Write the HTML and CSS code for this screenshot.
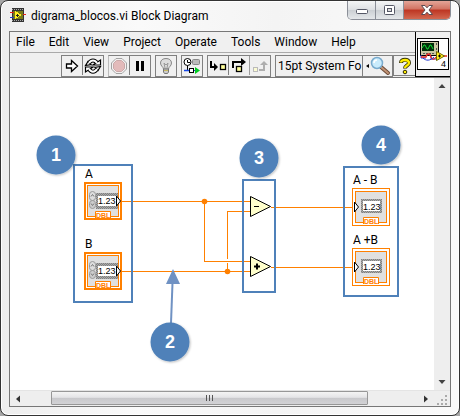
FILE: index.html
```html
<!DOCTYPE html>
<html lang="en">
<head>
<meta charset="utf-8">
<title>digrama_blocos.vi Block Diagram</title>
<link rel="stylesheet" href="styles.css">
</head>
<body>
<div class="window">
  <header class="titlebar">
    <svg class="app-icon" width="16" height="14" viewBox="0 0 16 14" shape-rendering="crispEdges" aria-hidden="true">
      <path fill="#333" d="M2 0h12v14H2z"/>
      <path stroke="#aaa" stroke-dasharray="1 1" d="M2 1.500h12M2 12.500h12"/>
      <path fill="#777a18" d="M3 3h10v8H3z"/>
      <path fill="#ffee20" d="M5 3l7 4-7 4z"/>
      <path stroke="#e32218" d="M0 4.500h4M13 6.500h3"/>
      <path stroke="#2538c8" d="M0 9.500h4"/>
      <path stroke="#222" d="M6 7.500h3M7.500 6v3"/>
    </svg>
    <h1 class="title">digrama_blocos.vi Block Diagram</h1>
    <div class="caption-buttons">
      <button class="caption minimize" aria-label="Minimize"><svg width="14" height="12" viewBox="0 0 14 12"><rect x="1.500" y="5.500" width="11" height="4" rx="1" fill="#fff" stroke="#555866"/></svg></button>
      <button class="caption maximize" aria-label="Maximize"><svg width="14" height="12" viewBox="0 0 14 12"><rect x="1.500" y="1.500" width="10" height="9" rx="1" fill="#fff" stroke="#555866"/><rect x="4.500" y="4.500" width="4" height="3" fill="#ddd" stroke="#555866"/></svg></button>
      <button class="caption close" aria-label="Close"><svg width="14" height="12" viewBox="0 0 14 12"><path d="M1.500 1.500h3.500l2 2.300 2-2.300h3.500L9 6l3.500 4.500H9L7 8.200 5 10.500H1.500L5 6z" fill="#fff" stroke="#5d4a50"/></svg></button>
    </div>
  </header>

  <main class="client">
    <div class="top">
      <div class="bars">
        <nav class="menu">
          <a href="#file">File</a><a href="#edit">Edit</a><a href="#view">View</a><a href="#project">Project</a><a href="#operate">Operate</a><a href="#tools">Tools</a><a href="#window">Window</a><a href="#help">Help</a>
        </nav>
        <div class="toolbar">
          <div class="group">
            <button class="tool" aria-label="Run"><svg width="18" height="18" viewBox="0 0 18 18"><path d="M3.500 7h5V3.500l6 5.500-6 5.500V11h-5z" fill="#fff" stroke="#000" stroke-width="1.300"/></svg></button>
            <button class="tool" aria-label="Run continuously"><svg width="18" height="18" viewBox="0 0 18 18"><g fill="none"><path d="M5 6c2-3.500 6-3.500 8 0M13 12c-2 3.500-6 3.500-8 0" stroke="#000" stroke-width="4"/><path d="M9 8h7.500v-5zM9 10H1.500v5z" fill="#fff" stroke="#000" stroke-width="1.200"/><path d="M1.500 8.500L4 4.500l3 3zM16.500 9.500L14 13.500l-3-3z" fill="#fff" stroke="#000" stroke-width="1.200"/><path d="M5 6c2-3.500 6-3.500 8 0M13 12c-2 3.500-6 3.500-8 0" stroke="#fff" stroke-width="2"/></g></svg></button>
          </div>
          <div class="group dim">
            <button class="tool faded" aria-label="Abort execution"><svg width="18" height="18" viewBox="0 0 18 18"><path d="M6 1.500h6L16.500 6v6L12 16.500H6L1.500 12V6z" fill="#f4f0f0" stroke="#888"/><path d="M6.500 3.500h5l3 3v5l-3 3h-5l-3-3v-5z" fill="#dfa9a9" stroke="#bd9090"/></svg></button>
            <button class="tool" aria-label="Pause"><svg width="18" height="18" viewBox="0 0 18 18"><path d="M5 4h3v10H5zM10 4h3v10h-3z"/></svg></button>
          </div>
          <div class="group">
            <button class="tool" aria-label="Highlight execution"><svg width="18" height="18" viewBox="0 0 18 18"><path d="M6.500 12c0-2-3-3-3-6C3.500 3 6 1.500 9 1.500S14.500 3 14.500 6c0 3-3 4-3 6z" fill="#ddd" stroke="#888"/><path d="M7 6l1 5M11 6l-1 5M7 6l2 2 2-2" fill="none" stroke="#999"/><path d="M6.500 12h5v3l-1 1.500h-3l-1-1.500z" fill="#ccc" stroke="#777"/><path d="M7 13.500h4" stroke="#c8b860"/></svg></button>
          </div>
          <div class="group">
            <button class="tool" aria-label="Retain wire values"><svg width="18" height="18" viewBox="0 0 18 18"><circle cx="4.500" cy="5" r="3.500" fill="#fff" stroke="#000"/><path d="M4.500 3v2.500H7M4.500 8.500V13" fill="none" stroke="#000"/><rect x="9.500" y="2.500" width="7" height="5" rx="1" fill="#bbb" stroke="#888"/><path d="M1 13.500h6" stroke="#1648e8" stroke-width="1.500"/><path d="M10 13.500h3" stroke="#1648e8"/><rect x="6.500" y="11.500" width="4" height="4" fill="#fff" stroke="#000"/><path d="M12 10l5 3.500-5 3.500z" fill="#00cc20"/></svg></button>
          </div>
          <div class="group">
            <button class="tool" aria-label="Step into"><svg width="18" height="18" viewBox="0 0 18 18"><path d="M2 4v6h3" fill="none" stroke="#000" stroke-width="2"/><path d="M5 6l4 4-4 4z"/><rect x="11.500" y="7.500" width="5" height="5" fill="#ffff9c" stroke="#000" stroke-width="1.300"/></svg></button>
            <button class="tool" aria-label="Step over"><svg width="18" height="18" viewBox="0 0 18 18"><path d="M3 11V5h9" fill="none" stroke="#000" stroke-width="2"/><path d="M11 1l5 4-5 4z"/><rect x="6.500" y="9.500" width="5" height="5" fill="#ffff9c" stroke="#000" stroke-width="1.300"/></svg></button>
            <button class="tool faded" aria-label="Step out"><svg width="18" height="18" viewBox="0 0 18 18"><rect x="2.500" y="10.500" width="4" height="4" fill="#ffffc8" stroke="#aaa"/><path d="M8 13h5V7" fill="none" stroke="#999" stroke-width="2"/><path d="M9 8l4-4 4 4z" fill="#999"/></svg></button>
          </div>
          <div class="group font-group">
            <button class="font-button">15pt System Fo</button>
            <button class="search" aria-label="Search"><svg width="26" height="20" viewBox="0 0 26 20"><path d="M1 10l3-2v4z"/><path d="M16 11l7 6" stroke="#6b4a37" stroke-width="4" stroke-linecap="round"/><path d="M16 11l7 6" stroke="#c09274" stroke-width="2" stroke-linecap="round"/><circle cx="12" cy="7" r="5.500" fill="#c9ebfc" stroke="#78aacd" stroke-width="1.500"/><path d="M9 7c0-2 1-3 3-3" fill="none" stroke="#fff" stroke-width="1.500"/></svg></button>
          </div>
          <button class="tool help" aria-label="Context help"><svg width="16" height="18" viewBox="0 0 16 18"><path d="M4 6c0-4.500 8-4.500 8 0 0 2.500-4 2.500-4 5.500" fill="none" stroke="#302c00" stroke-width="4"/><path d="M4 5.500c0-3.500 8-3.500 8 .5 0 2.500-4 2.500-4 5" fill="none" stroke="#ffed00" stroke-width="2.400"/><circle cx="8" cy="15" r="1.800" fill="#ffed00" stroke="#302c00"/></svg></button>
        </div>
      </div>
      <div class="vi-icon">
        <svg width="32" height="32" viewBox="0 0 32 32" role="img" aria-label="VI icon 4">
          <rect x=".5" y=".5" width="31" height="31" fill="#fff" stroke="#000"/>
          <rect x="3.500" y="3.500" width="18" height="14" fill="#c9c7a2" stroke="#000"/>
          <rect x="5" y="5" width="12" height="8" fill="#002d08"/>
          <path d="M5 10l2-3h1l2 4h1l2-4h1l2 4" fill="none" stroke="#16db36"/>
          <path d="M19.500 5v3M19.500 10v3M6 15.500h11" stroke="#555" stroke-dasharray="2 1"/>
          <path d="M4 17v3h5M14 18v3h6" fill="none" stroke="#2439d0"/>
          <path d="M4 19h5c1-4 4-4 5 0 1 3 3 3 5 0M26 18h4" fill="none" stroke="#e52b26" stroke-width="1.300"/>
          <path d="M6 20c3 3 7 3 11-1" fill="none" stroke="#2439d0"/>
          <path d="M19.500 13.500l8 4.500-8 4.500z" fill="#ffef1b" stroke="#6e6500"/>
          <path d="M21 18h3M22.500 16.500v3" stroke="#000"/>
          <text x="24" y="29" class="vi-number">4</text>
        </svg>
      </div>
    </div>

    <div class="workspace">
      <div class="canvas">
        <svg width="424" height="312" viewBox="10 78 424 312" role="img" aria-label="Block diagram">
          <defs>
            <pattern id="dither" width="2" height="2" patternUnits="userSpaceOnUse"><path fill="#aaa" d="M0 0h2v2H0z"/><path fill="#808080" d="M0 0h1v1H0zM1 1h1v1H1z"/></pattern>
            <filter id="soft" x="-20%" y="-20%" width="150%" height="150%"><feDropShadow dx="1" dy="1" stdDeviation="1" flood-opacity=".25"/></filter>
            <g id="control">
              <rect x="1" y="1" width="36" height="36" fill="#fff" stroke="#ff8000" stroke-width="2"/>
              <rect x="3.500" y="3.500" width="31" height="31" fill="#e0e0e0" stroke="#ff8000"/>
              <rect x="12" y="11" width="22" height="16" fill="url(#dither)"/>
              <rect x="5.500" y="9.500" width="6" height="9" rx="3" fill="#ddd" stroke="#999"/>
              <rect x="5.500" y="18.500" width="6" height="8" rx="3" fill="#ccc" stroke="#999"/>
              <path d="M7 14.500l1.500-2 1.500 2M7 21.500l1.500 2 1.500-2" fill="none" stroke="#777"/>
              <rect x="14" y="14" width="18" height="10" fill="#fff"/>
              <path d="M32.500 14v10l4-5z" fill="#fff" stroke="#000"/>
              <path d="M11.500 36v-6.500h15V36" fill="#fff" stroke="#ff8000"/>
              <text x="14" y="22" class="value">1.23</text>
              <text x="12" y="36" class="type">DBL</text>
            </g>
            <g id="indicator">
              <rect x=".5" y=".5" width="37" height="37" fill="#fff" stroke="#ff8000"/>
              <rect x="3.500" y="3.500" width="31" height="31" fill="#e0e0e0" stroke="#ff8000"/>
              <rect x="9" y="11" width="21" height="14" fill="url(#dither)"/>
              <rect x="11" y="13" width="17" height="10" fill="#fff"/>
              <path d="M2.500 14v10l4-5z" fill="#fff" stroke="#000"/>
              <path d="M11.500 36v-6.500h15V36" fill="#fff" stroke="#ff8000"/>
              <text x="11" y="22" class="value">1.23</text>
              <text x="12" y="36" class="type">DBL</text>
            </g>
          </defs>
          <g class="wire">
            <path d="M122 201.500h128M204.500 201v60.500H250M122 271.500h128M227.500 271v-8M227.500 259v-47.500H250M271 207.500h82M271 267.500h82"/>
          </g>
          <circle cx="204.500" cy="201.500" r="2.800" class="joint"/>
          <circle cx="227.500" cy="271.500" r="2.800" class="joint"/>
          <use href="#control" x="84" y="182"/>
          <use href="#control" x="84" y="252"/>
          <use href="#indicator" x="352" y="188"/>
          <use href="#indicator" x="352" y="248"/>
          <path class="node" d="M250.500 196.500v20l20-10z"/>
          <path class="node" d="M250.500 256.500v20l20-10z"/>
          <path class="sign" d="M254 206.500h5"/>
          <path class="sign plus" d="M254 266.500h6M257 263.500v6"/>
          <text class="label" x="85" y="178">A</text>
          <text class="label" x="85" y="248">B</text>
          <text class="label" x="353" y="184">A - B</text>
          <text class="label" x="353" y="244">A +B</text>
          <rect class="frame" x="74" y="165" width="58" height="137"/>
          <rect class="frame" x="243" y="180" width="32" height="112"/>
          <rect class="frame" x="344" y="167" width="54" height="129"/>
          <path d="M171 323l1.500-40" stroke="#7092c3" stroke-width="2"/>
          <path d="M173 269l7 15h-14z" fill="#7092c3"/>
          <g class="badges" filter="url(#soft)">
            <circle cx="56" cy="155" r="19.500"/><circle cx="170" cy="342" r="19.500"/><circle cx="259" cy="158" r="19.500"/><circle cx="381" cy="145" r="19.500"/>
          </g>
          <g class="numbers">
            <text x="56" y="161">1</text><text x="170" y="348">2</text><text x="259" y="164">3</text><text x="381" y="151">4</text>
          </g>
        </svg>
      </div>
      <div class="vscroll">
        <button class="arrow" aria-label="Scroll up"><svg width="8" height="5" viewBox="0 0 8 5"><path fill="#444" d="M4 0l3.500 4h-7z"/></svg></button>
        <button class="arrow" aria-label="Scroll down"><svg width="8" height="5" viewBox="0 0 8 5"><path fill="#444" d="M4 4L.5 0h7z"/></svg></button>
      </div>
    </div>

    <div class="hscroll">
      <button class="arrow" aria-label="Scroll left"><svg width="5" height="8" viewBox="0 0 5 8"><path fill="#333" d="M0 4l4-3.500v7z"/></svg></button>
      <div class="track"><div class="thumb"><i></i><i></i><i></i></div></div>
      <button class="arrow" aria-label="Scroll right"><svg width="5" height="8" viewBox="0 0 5 8"><path fill="#333" d="M4 4L0 .5v7z"/></svg></button>
      <svg class="grip" width="16" height="16" viewBox="0 0 16 16"><path fill="#aaa" d="M11 4h2v2h-2zM7 8h2v2H7zM11 8h2v2h-2zM3 12h2v2H3zM7 12h2v2H7zM11 12h2v2h-2z"/></svg>
    </div>
  </main>
</div>
</body>
</html>
```
FILE: styles.css
```css
* { box-sizing: border-box; }
html, body { height: 100%; }
body {
  margin: 0;
  background: #a6a6a6;
  font: 12px/16px Roboto, "Noto Sans", sans-serif;
  color: #000;
}
button { margin: 0; padding: 0; border: 0; background: none; font: inherit; color: inherit; }
svg { display: block; flex: none; }

.window {
  display: flex;
  flex-direction: column;
  height: 100vh;
  padding: 0 8px 8px;
  border: 1px solid #333;
  border-radius: 8px;
  background: linear-gradient(90deg, #eee, #fafafa 30%, #f4f4f4 60%, #fafafa);
  box-shadow: inset 0 0 0 1px #fff;
}
.titlebar { display: flex; align-items: flex-start; height: 30px; }
.app-icon { margin: 7px 5px 0 1px; }
.title { flex: 1; margin: 6px 0 0; font-size: 12px; font-weight: 400; line-height: 18px; white-space: nowrap; }
.caption-buttons {
  display: flex;
  height: 19px;
  border: 1px solid #8b8f98;
  border-top: 0;
  border-radius: 0 0 5px 5px;
  overflow: hidden;
}
.caption {
  display: flex;
  align-items: center;
  justify-content: center;
  width: 28px;
  border-right: 1px solid #8b8f98;
  background: linear-gradient(#f4f5f6, #dcdfe2 50%, #cbcfd3 50%, #e4e7ea);
}
.close {
  width: 46px;
  border-right: 0;
  background: linear-gradient(#e4a598, #d17362 45%, #bd3522 50%, #d26850);
}

.client {
  flex: 1;
  display: flex;
  flex-direction: column;
  min-height: 0;
  border: 1px solid #777;
  background: #f0f0f0;
}
.top { display: flex; height: 46px; border-bottom: 1px solid #777; }
.bars { flex: 1; min-width: 0; }
.menu {
  display: flex;
  gap: 14px;
  height: 21px;
  padding: 2px 6px;
  border-bottom: 1px solid #aaa;
}
.menu a { color: inherit; text-decoration: none; }
.toolbar { display: flex; gap: 4px; padding: 2px 0 0 51px; }
.group { display: flex; border: 1px solid #808080; }
.dim { border-left-color: #bbb; }
.tool {
  display: flex;
  align-items: center;
  justify-content: center;
  width: 20px;
  height: 19px;
}
.tool + .tool { width: 21px; border-left: 1px solid #808080; }
.faded { opacity: 0.75; }
.font-group { flex: 1; min-width: 0; }
.font-button { flex: 1; min-width: 0; height: 19px; padding-left: 2px; white-space: nowrap; text-align: left; }
.search { border-left: 1px solid #808080; width: 30px; display: flex; justify-content: center; }
.help { height: 21px; border: 1px solid #808080; border-right: 0; margin-left: -4px; width: 22px; }
.vi-icon {
  display: flex;
  align-items: center;
  justify-content: center;
  width: 35px;
  border-left: 1px solid #000;
  border-bottom: 1px solid #000;
}
.vi-number { font: 9px "Liberation Sans", sans-serif; }

.workspace { flex: 1; display: flex; min-height: 0; }
.canvas { flex: 1; min-width: 0; overflow: hidden; background: #fff; }
.vscroll {
  display: flex;
  flex-direction: column;
  justify-content: space-between;
  width: 16px;
  background: #eee;
}
.arrow { display: flex; align-items: center; justify-content: center; width: 16px; height: 16px; }
.hscroll { display: flex; height: 16px; border-top: 1px solid #e4e4e4; background: #eee; }
.track { flex: 1; padding: 0 50px 1px 25px; }
.thumb {
  display: flex;
  align-items: center;
  justify-content: center;
  gap: 2px;
  height: 14px;
  border: 1px solid #979797;
  border-radius: 1px;
  background: linear-gradient(#f4f4f4, #e4e4e6 45%, #c8c8cb 50%, #d2d2d5);
}
.thumb i { width: 1px; height: 6px; background: #555; }

.wire { fill: none; stroke: #ff8000; shape-rendering: crispEdges; }
.joint { fill: #ff8000; }
.node { fill: #ffffcc; stroke: #000; }
.sign { stroke: #000; }
.plus { stroke-width: 2; }
.frame { fill: none; stroke: #4f81b9; stroke-width: 2; }
.label { font: 12px Roboto, sans-serif; }
.value { font: 9px "Liberation Sans", sans-serif; }
.type { font: bold 7px "Liberation Sans", sans-serif; fill: #ff8000; }
.badges { fill: #4f81b9; }
.numbers { fill: #fff; font: bold 18px "Liberation Sans", sans-serif; text-anchor: middle; }
```
